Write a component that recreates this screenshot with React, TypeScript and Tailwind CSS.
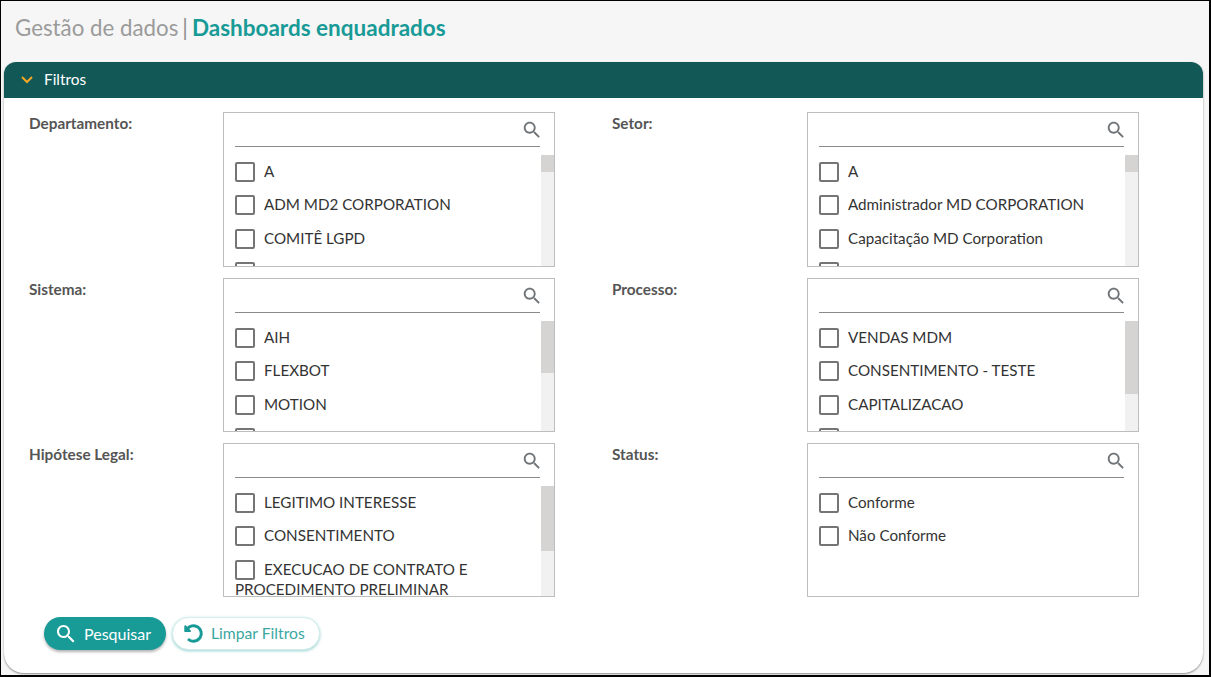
import React from "react";
import { FaUndoAlt } from "react-icons/fa";

type FilterBox = {
  label: string;
  items: string[];
  thumb?: string;
};

// the empty item is the next row, cut off by the list edge with only its checkbox showing
const filters: FilterBox[] = [
  {
    label: "Departamento:",
    items: ["A", "ADM MD2 CORPORATION", "COMITÊ LGPD", ""],
    thumb: "h-[17px]",
  },
  {
    label: "Setor:",
    items: ["A", "Administrador MD CORPORATION", "Capacitação MD Corporation", ""],
    thumb: "h-[17px]",
  },
  {
    label: "Sistema:",
    items: ["AIH", "FLEXBOT", "MOTION", ""],
    thumb: "h-[52px]",
  },
  {
    label: "Processo:",
    items: ["VENDAS MDM", "CONSENTIMENTO - TESTE", "CAPITALIZACAO", ""],
    thumb: "h-[73px]",
  },
  {
    label: "Hipótese Legal:",
    items: [
      "LEGITIMO INTERESSE",
      "CONSENTIMENTO",
      "EXECUCAO DE CONTRATO E PROCEDIMENTO PRELIMINAR",
    ],
    thumb: "h-[65px]",
  },
  {
    label: "Status:",
    items: ["Conforme", "Não Conforme"],
  },
];

function SearchIcon({ className }: { className: string }) {
  return (
    <svg viewBox="0 0 24 24" fill="currentColor" className={className}>
      <path d="M15.5 14h-.79l-.28-.27C15.41 12.59 16 11.11 16 9.5 16 5.91 13.09 3 9.5 3S3 5.91 3 9.5 5.91 16 9.5 16c1.61 0 3.09-.59 4.23-1.57l.27.28v.79l5 4.99L20.49 19l-4.99-5zm-6 0C7.01 14 5 11.99 5 9.5S7.01 5 9.5 5 14 7.01 14 9.5 11.99 14 9.5 14z" />
    </svg>
  );
}

function FilterField({ label, items, thumb, wide }: FilterBox & { wide: boolean }) {
  return (
    <div className="flex items-start h-full min-h-0">
      <div className={`${wide ? "w-[195px]" : "w-[194px]"} pt-[1px] text-[15.3px] leading-[20px] font-bold text-[#555]`}>
        {label}
      </div>
      <div className="h-full w-[332px] border border-[#bdbdbd] bg-white flex flex-col overflow-hidden">
        <div className="ml-[11px] mr-[14px] h-[34px] shrink-0 border-b border-[#8a8a8a] flex justify-end items-center">
          <SearchIcon className="w-[22px] h-[22px] -mr-[3px] text-[#6f7478]" />
        </div>
        <div className="flex flex-1 min-h-0 mt-[8px]">
          <div className="flex-1 min-w-0 pl-[11px] pr-[2px] pt-[7px] overflow-hidden">
            {items.map((item, index) => (
              <div key={index} className="min-h-[33.4px] text-[15.2px] leading-[19px] text-[#333]">
                <span className="inline-block align-top w-[20px] h-[20px] mr-[9px] rounded-[2px] border-2 border-[#757575]" />
                {item}
              </div>
            ))}
          </div>
          {thumb && (
            <div className="w-[13px] bg-[#f1f1f1] shrink-0">
              <div className={`${thumb} bg-[#d5d4d2]`} />
            </div>
          )}
        </div>
      </div>
    </div>
  );
}

export default function App() {
  return (
    <div className="h-[677px] w-[1211px] overflow-hidden bg-[#f6f6f6] border-t-[1px] border-l-[1px] border-r-[2px] border-b-[2px] border-black font-['Lato','Noto_Sans',sans-serif]">
      <div className="h-[61px] pl-[14px] pt-[13px] pb-[20px] text-[22.3px] leading-[28px] flex items-center">
        <span className="text-[#9b9b9b]">Gestão de dados</span>
        <span className="text-[#8f8f8f] mx-[4px]">|</span>
        <span className="text-[#189a96] font-bold text-[22.5px]">Dashboards enquadrados</span>
      </div>

      <div className="ml-[3px] mr-[6px] h-[611px] rounded-t-[12px] rounded-b-[20px] bg-white shadow-[0_1px_2px_rgba(0,0,0,0.45)]">
        <div className="h-[36px] rounded-t-[12px] bg-[#115857] flex items-center pl-[17px] pb-[1px] text-white text-[15.4px]">
          <svg viewBox="0 0 12 8" className="w-[12px] h-[8px] mr-[11px]" fill="none" stroke="#f5a623" strokeWidth="2">
            <path d="M1 1l5 5 5-5" />
          </svg>
          Filtros
        </div>

        <div className="pl-[25px] pt-[14px] grid grid-cols-[526px_527px] grid-rows-[155px_154px_154px] gap-x-[57px] gap-y-[11px]">
          {filters.map((filter, index) => (
            <FilterField key={filter.label} wide={index % 2 === 1} {...filter} />
          ))}
        </div>

        <div className="pl-[40px] pt-[20px] flex gap-[6px]">
          <button className="h-[33px] w-[122px] rounded-full bg-[#189a96] text-white text-[16px] flex items-center pl-[10px] shadow-[0_2px_3px_rgba(0,0,0,0.3)]">
            <SearchIcon className="w-[24px] h-[24px] mr-[6px]" />
            Pesquisar
          </button>
          <button className="h-[33px] w-[148px] rounded-full bg-white text-[#3ba7a3] text-[15.7px] flex items-center pl-[11px] border border-[#d3eeed] shadow-[0_1px_3px_rgba(24,154,150,0.45)]">
            <FaUndoAlt className="w-[19px] h-[19px] mr-[8px] text-[#189a96]" />
            Limpar Filtros
          </button>
        </div>
      </div>
    </div>
  );
}
